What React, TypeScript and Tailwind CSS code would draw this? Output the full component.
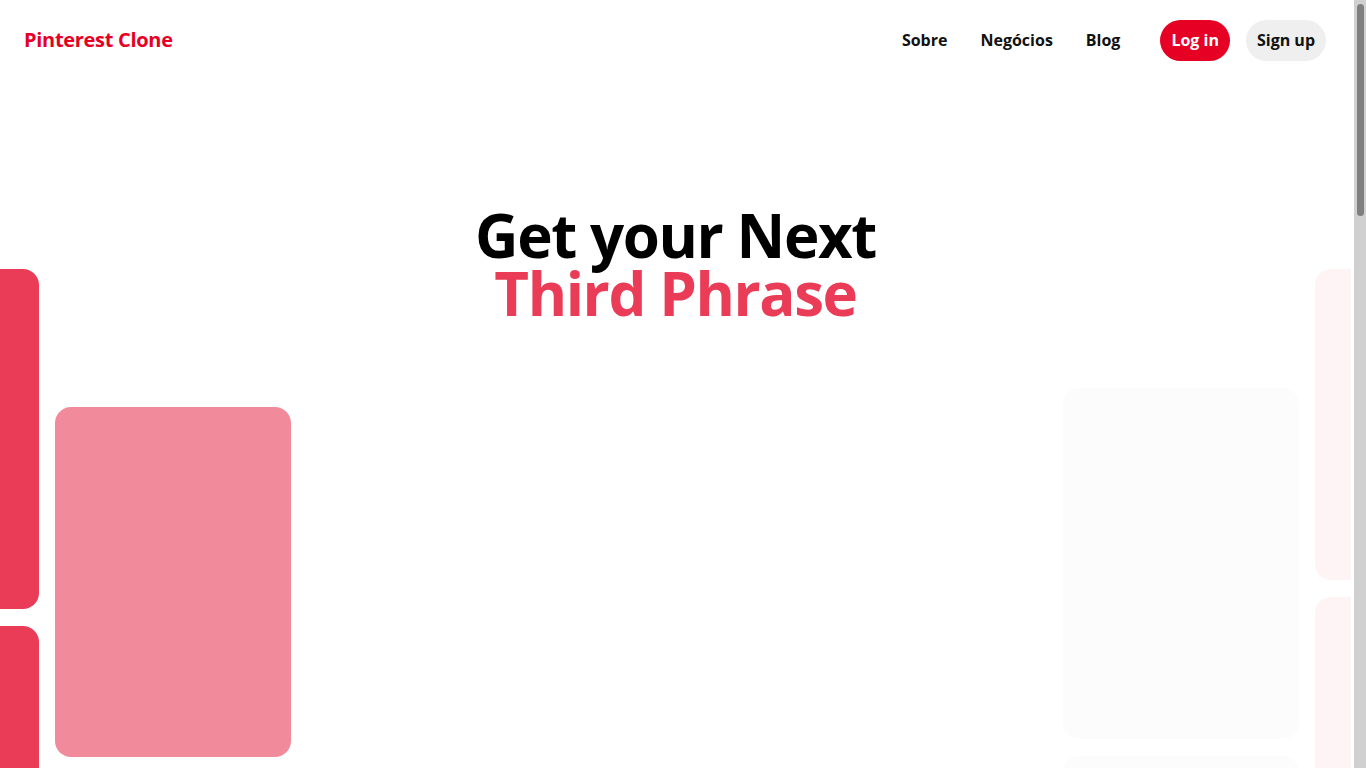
import React from "react";

type Card = { h: number; color: string };
type Col = { top: number; cards: Card[] };

const cols: Col[] = [
  { top: 0, cards: [{ h: 340, color: "bg-[#ea3b57]" }, { h: 350, color: "bg-[#ea3b57]" }, { h: 320, color: "bg-[#ea3b57]" }] },
  { top: 138, cards: [{ h: 350, color: "bg-[#f18b9b]" }, { h: 340, color: "bg-[#f18b9b]" }, { h: 320, color: "bg-[#f18b9b]" }] },
  { top: 240, cards: [{ h: 350, color: "bg-transparent" }, { h: 340, color: "bg-transparent" }] },
  { top: 280, cards: [{ h: 350, color: "bg-transparent" }, { h: 340, color: "bg-transparent" }] },
  { top: 240, cards: [{ h: 350, color: "bg-transparent" }, { h: 340, color: "bg-transparent" }] },
  { top: 119, cards: [{ h: 351, color: "bg-[#fcfcfc]" }, { h: 340, color: "bg-[#fcfcfc]" }, { h: 320, color: "bg-[#fcfcfc]" }] },
  { top: 0, cards: [{ h: 311, color: "bg-[#fef4f5]" }, { h: 350, color: "bg-[#fef4f5]" }, { h: 320, color: "bg-[#fef4f5]" }] },
];

export default function App() {
  return (
    <div className="flex bg-white" style={{ fontFamily: '"Open Sans", "Noto Sans", sans-serif' }}>
      <div className="w-[1351px] shrink-0 min-h-[2830px] overflow-hidden">
        <header className="h-20 pl-6 pr-[25px] flex items-center justify-between">
          <div className="text-[20px] font-bold text-[#e60023] tracking-[-0.3px]">Pinterest Clone</div>
          <nav className="flex items-center">
            <div className="flex items-center gap-[33px] text-[16px] font-bold text-[#111]">
              <a>Sobre</a>
              <a>Negócios</a>
              <a>Blog</a>
            </div>
            <div className="flex items-center gap-4 ml-10 text-[16px] font-bold">
              <button className="h-[41px] px-[11px] rounded-full bg-[#e60023] text-white">Log in</button>
              <button className="h-[41px] px-[11px] rounded-full bg-[#efefef] text-[#111]">Sign up</button>
            </div>
          </nav>
        </header>
        <section>
          <div className="relative z-10 pt-[126px] text-center text-[60px] font-bold leading-[58px] tracking-[-1.4px] h-[189px]">
            <div className="text-black">Get your Next</div>
            <div className="text-[#ea3b57]">Third Phrase</div>
          </div>
          <div className="flex justify-center gap-4 overflow-hidden h-[1400px] pl-[3px]">
            {cols.map((c, i) => (
              <div key={i} className="w-[236px] shrink-0 flex flex-col gap-[17px]" style={{ marginTop: c.top }}>
                {c.cards.map((card, j) => (
                  <div key={j} className={`rounded-2xl ${card.color}`} style={{ height: card.h }} />
                ))}
              </div>
            ))}
          </div>
        </section>
      </div>
      <aside className="w-[15px] shrink-0 h-screen sticky top-0 flex bg-white">
        <div className="ml-[3px] flex-1 bg-[#d0d0d0] pt-[4px] px-[2px]">
          <div className="h-[212px] w-[7px] ml-px rounded-full bg-[#7f7f7f]" />
        </div>
      </aside>
    </div>
  );
}
